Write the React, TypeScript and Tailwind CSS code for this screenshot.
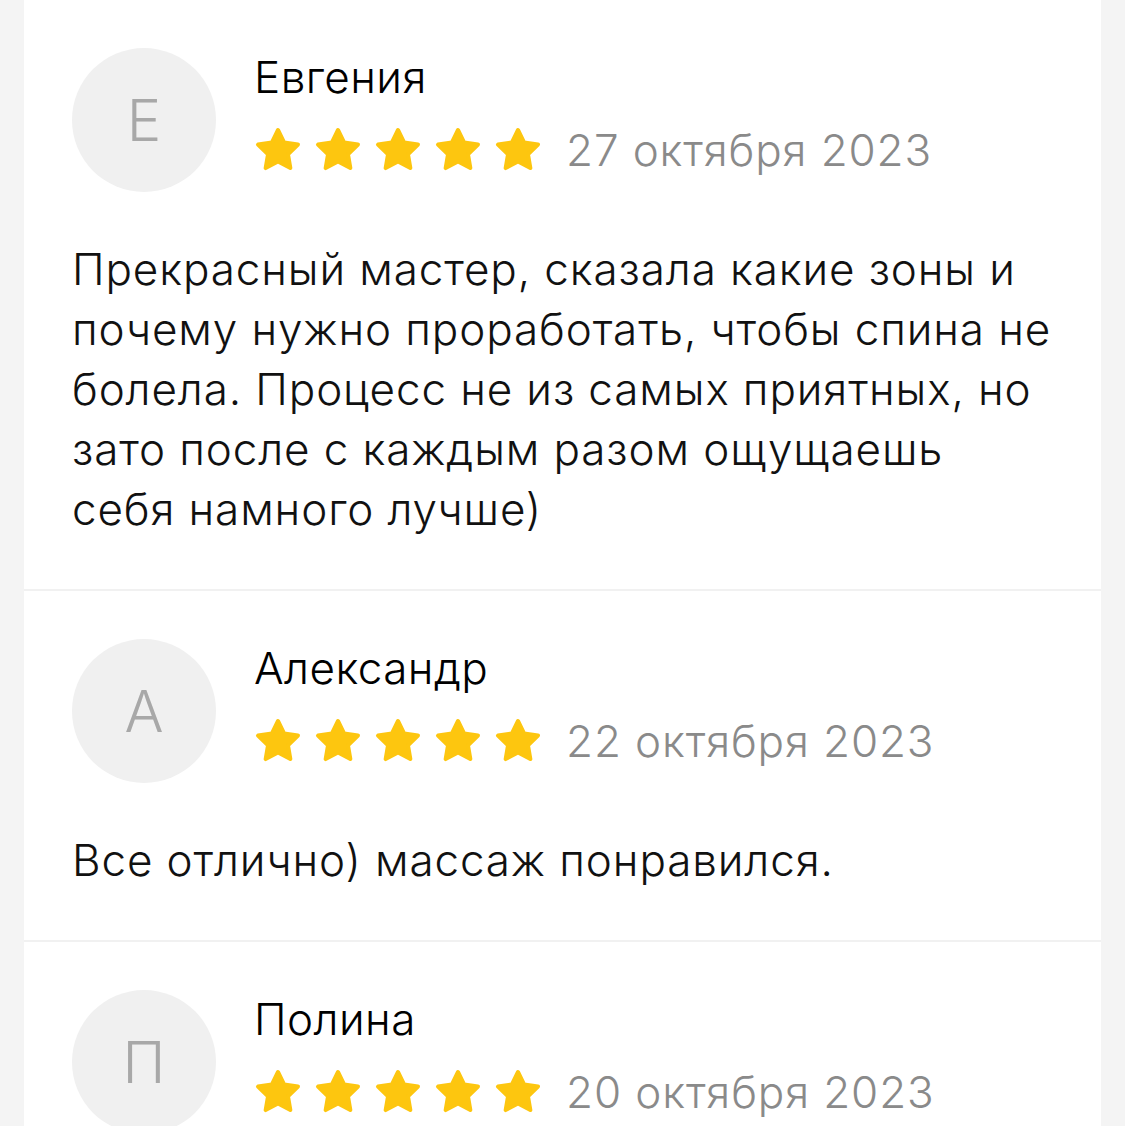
const reviews = [
  {
    name: 'Евгения',
    date: '27 октября 2023',
    text: 'Прекрасный мастер, сказала какие зоны и почему нужно проработать, чтобы спина не болела. Процесс не из самых приятных, но зато после с каждым разом ощущаешь себя намного лучше)',
  },
  {
    name: 'Александр',
    date: '22 октября 2023',
    text: 'Все отлично) массаж понравился.',
  },
  {
    name: 'Полина',
    date: '20 октября 2023',
    text: 'Очень понравилось, рекомендую!',
  },
];

function Star() {
  return (
    <svg className="w-12 h-12 shrink-0" viewBox="0 0 24 24" fill="#fdc60f" stroke="#fdc60f" strokeWidth={2} strokeLinejoin="round">
      <path d="M12 2l3.09 6.26L22 9.27l-5 4.87 1.18 6.88L12 17.77l-6.18 3.25L7 14.14 2 9.27l6.91-1.01L12 2z" />
    </svg>
  );
}

function Review({ name, date, text }: { name: string; date: string; text: string }) {
  return (
    <div className="px-12 pt-12 pb-[50px] border-b-2 border-[#f1f1f1]">
      <div className="flex items-start">
        <div className="w-36 h-36 rounded-full bg-[#f0f0f0] flex items-center justify-center shrink-0">
          <span className="text-[58px] leading-none font-light text-[#a8a8a8]">{name[0]}</span>
        </div>
        <div className="ml-[38px] pt-[3px]">
          <div className="text-[44px] leading-[52px] font-light tracking-[0.01em] text-black">{name}</div>
          <div className="flex items-center mt-[23px]">
            <div className="flex gap-3">
              {[0, 1, 2, 3, 4].map((i) => (
                <Star key={i} />
              ))}
            </div>
            <span className="ml-[24px] text-[44px] leading-none font-light tracking-[0.02em] text-[#8a8a8a]">{date}</span>
          </div>
        </div>
      </div>
      <p className="mt-[47px] text-[44px] leading-[60px] font-light tracking-[0.02em] text-[#111]">{text}</p>
    </div>
  );
}

export default function App() {
  return (
    <div className="min-h-screen bg-[#f4f4f4] px-6 overflow-hidden" style={{ fontFamily: 'Inter, "Noto Sans", sans-serif' }}>
      <div className="bg-white w-[1077px]">
        {reviews.map((r) => (
          <Review key={r.name} {...r} />
        ))}
      </div>
    </div>
  );
}
